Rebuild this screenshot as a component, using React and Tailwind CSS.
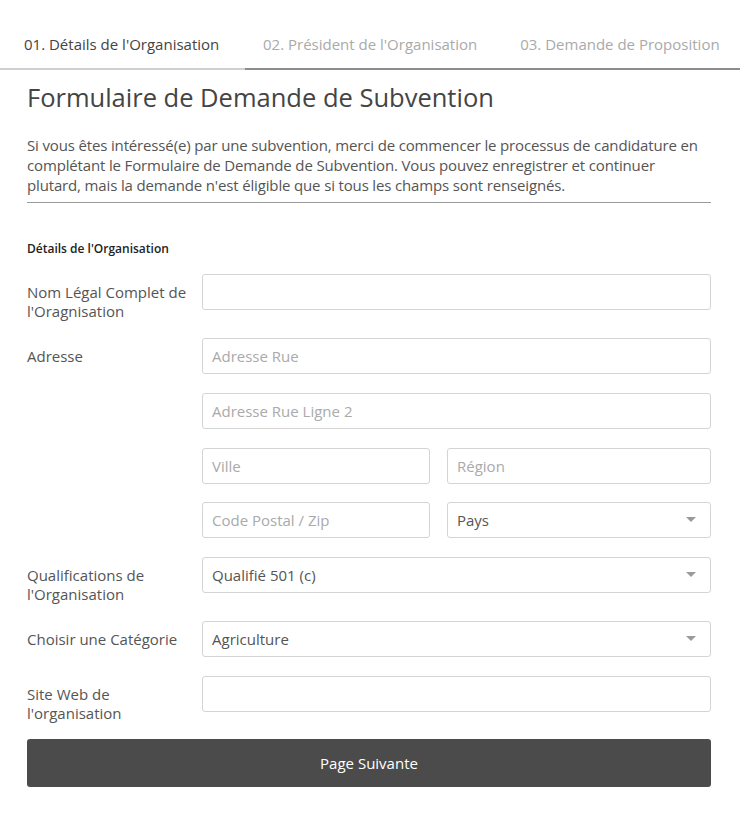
import React from "react";

const Caret = () => (
  <svg width="10" height="6" viewBox="0 0 10 6" className="shrink-0">
    <path d="M0 0 L10 0 L5 5 Z" fill="#9a9a9a" />
  </svg>
);

const Input = ({ placeholder, className = "w-full" }) => (
  <input
    type="text"
    placeholder={placeholder}
    className={`h-[36px] min-w-0 rounded-[3px] border border-[#d4d4d4] bg-white px-[9px] text-[15px] text-[#555] outline-none placeholder:text-[#aaa] ${className}`}
  />
);

const Select = ({ value, className = "w-full" }) => (
  <div className={`flex h-[36px] min-w-0 items-center justify-between rounded-[3px] border border-[#d4d4d4] bg-white pl-[9px] pr-[14px] text-[15px] text-[#555] ${className}`}>
    <span>{value}</span>
    <Caret />
  </div>
);

const Row = ({ label, children, className = "" }) => (
  <div className={`flex ${className}`}>
    <div className="w-[175px] shrink-0 pt-[9px] text-[15px] leading-[19px] text-[#555]">{label}</div>
    <div className="min-w-0 flex-1">{children}</div>
  </div>
);

export default function App() {
  return (
    <div className="min-h-[814px] w-[740px] bg-white" style={{ fontFamily: '"Open Sans", sans-serif' }}>
      {/* Tabs */}
      <div className="flex h-[70px] text-[15px]">
        <div className="flex w-[245px] items-end border-b-2 border-[#d0d0d0] pb-[13px] pl-[24px] text-[#444]">
          01. Détails de l'Organisation
        </div>
        <div className="flex flex-1 items-end border-b-2 border-[#8c8c8c] pb-[13px] pl-[18px] text-[#aaa]">
          <span>02. Président de l'Organisation</span>
          <span className="ml-[43px] whitespace-nowrap">03. Demande de Proposition</span>
        </div>
      </div>

      <div className="pl-[27px] pr-[29px]">
        <h1 className="mt-[10px] text-[25.5px] leading-[34px] text-[#444]">Formulaire de Demande de Subvention</h1>

        <p className="mt-[21px] border-b border-[#9a9a9a] pb-[7px] text-[15px] leading-[20px] tracking-[-0.15px] text-[#555]">
          Si vous êtes intéressé(e) par une subvention, merci de commencer le processus de candidature en complétant le
          Formulaire de Demande de Subvention. Vous pouvez enregistrer et continuer plutard, mais la demande n'est éligible
          que si tous les champs sont renseignés.
        </p>

        <div className="mt-[37px] text-[12px] font-semibold text-[#222]">Détails de l'Organisation</div>

        <div className="mt-[16px] flex flex-col">
          <Row label={<>Nom Légal Complet de<br />l'Oragnisation</>}>
            <Input />
          </Row>
          <Row label="Adresse" className="mt-[17px]">
            <div className="flex flex-col gap-[19px]">
              <Input placeholder="Adresse Rue" />
              <Input placeholder="Adresse Rue Ligne 2" />
              <div className="flex gap-[17px]">
                <Input placeholder="Ville" className="w-[228px] shrink-0" />
                <Input placeholder="Région" className="flex-1" />
              </div>
              <div className="-mt-px flex gap-[17px]">
                <Input placeholder="Code Postal / Zip" className="w-[228px] shrink-0" />
                <Select value="Pays" className="flex-1" />
              </div>
            </div>
          </Row>
          <Row label={<>Qualifications de<br />l'Organisation</>} className="mt-[19px]">
            <Select value="Qualifié 501 (c)" />
          </Row>
          <Row label="Choisir une Catégorie" className="mt-[17px]">
            <Select value="Agriculture" />
          </Row>
          <Row label={<>Site Web de<br />l'organisation</>} className="mt-[19px]">
            <Input />
          </Row>
        </div>

        <button className="mt-[16px] h-[48px] w-full rounded-[3px] bg-[#4b4b4b] text-[15px] text-white">
          Page Suivante
        </button>
      </div>
    </div>
  );
}
